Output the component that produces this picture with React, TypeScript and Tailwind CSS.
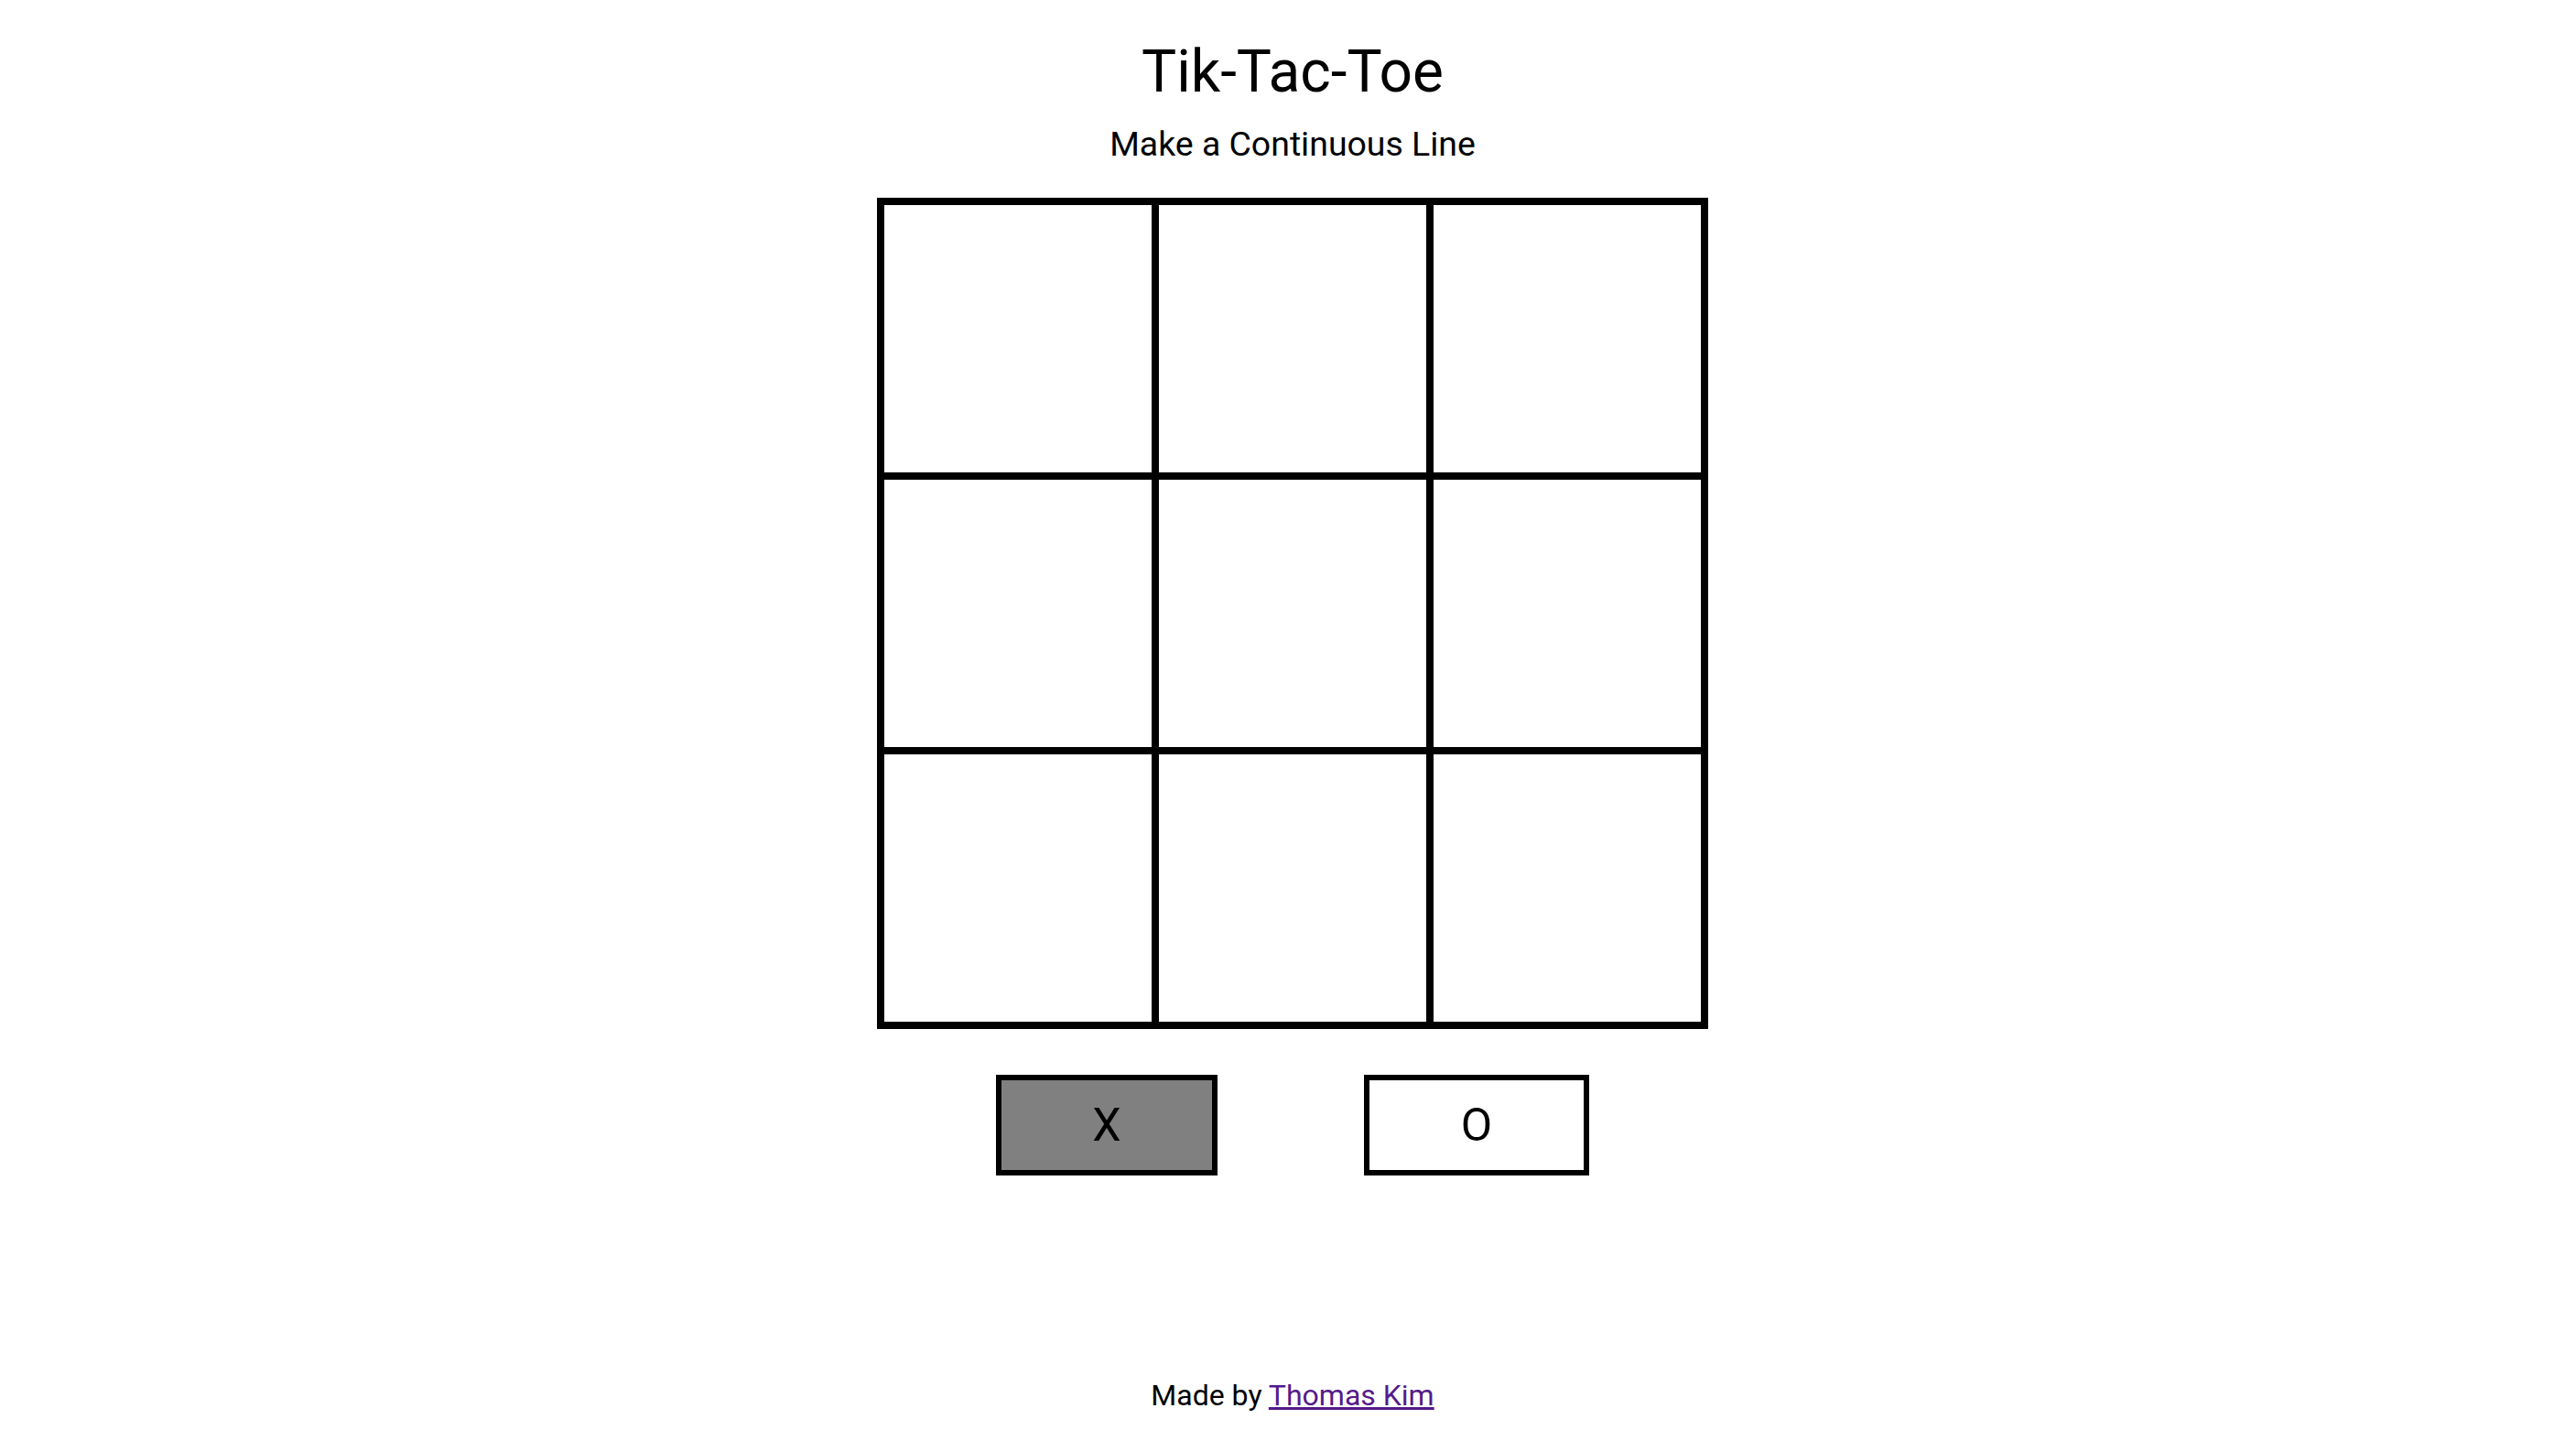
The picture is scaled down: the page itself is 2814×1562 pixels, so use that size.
import React, { useState } from "react";

type Mark = "X" | "O" | null;

export default function App() {
  const [board, setBoard] = useState<Mark[]>(Array(9).fill(null));
  const [player, setPlayer] = useState<"X" | "O">("X");

  const play = (i: number) => {
    if (board[i]) return;
    const next = [...board];
    next[i] = player;
    setBoard(next);
    setPlayer(player === "X" ? "O" : "X");
  };

  return (
    <div className="min-h-screen bg-white pl-[10px] font-['Roboto','Liberation_Sans',sans-serif] text-black">
      <div className="flex flex-col items-center">
        <h1 className="mt-[47px] text-[64px] font-normal leading-none">Tik-Tac-Toe</h1>
        <p className="mt-[28px] text-[37.44px] leading-none">Make a Continuous Line</p>

        {/* board */}
        <div className="mt-[40px] grid grid-cols-3 border-4 border-black">
          {board.map((cell, i) => (
            <button
              key={i}
              onClick={() => play(i)}
              className="flex h-[300px] w-[300px] items-center justify-center border-4 border-black bg-white text-[120px]"
            >
              {cell}
            </button>
          ))}
        </div>

        {/* player picker */}
        <div className="mt-[50px] flex gap-[160px]">
          <button
            onClick={() => setPlayer("X")}
            className={`flex h-[110px] w-[242px] items-center justify-center border-[6px] border-black text-[50px] leading-none ${
              player === "X" ? "bg-[#808080]" : "bg-white"
            }`}
          >
            X
          </button>
          <button
            onClick={() => setPlayer("O")}
            className={`flex h-[110px] w-[246px] items-center justify-center border-[6px] border-black text-[50px] leading-none ${
              player === "O" ? "bg-[#808080]" : "bg-white"
            }`}
          >
            O
          </button>
        </div>

        <p className="mt-[224px] text-[32px] leading-none">
          Made by{" "}
          <a href="#" className="text-[#551a8b] underline">
            Thomas Kim
          </a>
        </p>
      </div>
    </div>
  );
}
